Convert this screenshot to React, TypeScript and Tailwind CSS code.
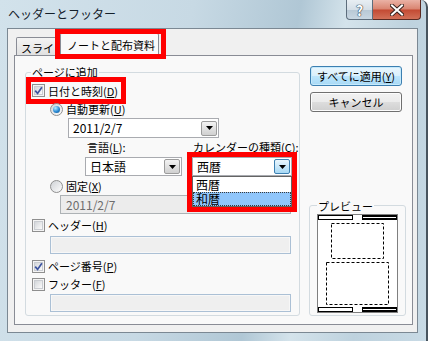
import React from "react";

const jp = "font-['Noto_Sans_CJK_JP','Noto_Sans',sans-serif]";

function CheckBox({ checked = false }: { checked?: boolean }) {
  return (
    <span className="flex h-[13px] w-[13px] shrink-0 items-center justify-center border border-[#8f8f8f] bg-[#f4f4f4] p-[1px]">
      <span className="relative flex h-full w-full items-center justify-center border border-[#c9ccd1] bg-gradient-to-br from-[#d3d6da] to-[#fbfbfb]">
        {checked && (
          <svg width="9" height="9" viewBox="0 0 9 9" className="absolute">
            <path d="M1.2 4.6 L3.6 7.4 L7.9 1.2" stroke="#3d54a0" strokeWidth="1.7" fill="none" />
          </svg>
        )}
      </span>
    </span>
  );
}

function Radio({ checked = false }: { checked?: boolean }) {
  return (
    <span className="flex h-[13px] w-[13px] shrink-0 items-center justify-center rounded-full border border-[#8f8f8f] bg-gradient-to-br from-[#cfd2d6] to-[#fdfdfd]">
      {checked && (
        <span className="h-[7px] w-[7px] rounded-full bg-[radial-gradient(circle_at_35%_30%,#b8ecff_0%,#2a8ad4_55%,#104d86_100%)]" />
      )}
    </span>
  );
}

function Arrow() {
  return (
    <svg width="7" height="4" viewBox="0 0 7 4">
      <path d="M0 0 H7 L3.5 4 Z" fill="#000" />
    </svg>
  );
}

function Combo({ text, className, hot = false }: { text: string; className: string; hot?: boolean }) {
  return (
    <div className={`flex items-center border border-[#a9abb0] bg-white pl-[4px] pr-[1px] ${className}`}>
      <span className="flex-1 text-[12px] leading-[14px]">{text}</span>
      <span
        className={`flex h-[15px] w-[16px] items-center justify-center rounded-[2px] border ${
          hot
            ? "border-[#3c7fb1] bg-gradient-to-b from-[#eaf6fd] to-[#a7d9f5]"
            : "border-[#9c9c9c] bg-gradient-to-b from-[#f3f3f3] to-[#d0d0d0]"
        }`}
      >
        <Arrow />
      </span>
    </div>
  );
}

function Key({ k }: { k: string }) {
  return (
    <>
      (<span className="underline underline-offset-1">{k}</span>)
    </>
  );
}

export default function App() {
  return (
    <div
      className={`flex h-[341px] w-[428px] flex-col overflow-hidden rounded-tr-[7px] border-r-[2px] border-[#48545e] bg-[linear-gradient(100deg,#d2e2eb_0%,#c7d9e4_40%,#b0c7d5_62%,#d4e3eb_72%,#bed2de_85%,#c8dae5_100%)] text-[11px] text-black ${jp}`}
    >
      {/* title bar */}
      <div className="flex h-[28px] shrink-0 items-start justify-between pl-[8px] pr-[5px]">
        <span className="mt-[5px] text-[12px] leading-[17px] text-[#14202a]">ヘッダーとフッター</span>
        <div className="flex">
          <div className="flex h-[20px] w-[27px] items-center justify-center rounded-bl-[4px] border border-t-0 border-[#5d6d7c] bg-[linear-gradient(#e8eef3_0%,#d5dfe7_50%,#b8c8d5_52%,#c9d7e2_100%)] text-[14px] font-bold leading-none text-white [text-shadow:0_0_1px_#2d3d4c,0_0_1px_#2d3d4c,0_0_1px_#2d3d4c]">
            ?
          </div>
          <div className="flex h-[20px] w-[48px] items-center justify-center rounded-br-[4px] border border-l-0 border-t-0 border-[#5a2a22] bg-[linear-gradient(#eab2a5_0%,#d98470_48%,#c34a33_52%,#d27058_100%)]">
            <svg width="14" height="12" viewBox="0 0 14 12">
              <path d="M2 1.5 L12 10.5 M12 1.5 L2 10.5" stroke="#3a2420" strokeWidth="4" strokeLinecap="square" />
              <path d="M2 1.5 L12 10.5 M12 1.5 L2 10.5" stroke="#ffffff" strokeWidth="2" strokeLinecap="square" />
            </svg>
          </div>
        </div>
      </div>

      {/* body */}
      <div className="flex flex-1 flex-col pb-[8px] pl-[7px] pr-[8px]">
        <div className="flex flex-1 flex-col border border-[#7b8893] bg-[#f0f0f0] pb-[7px] pl-[6px] pr-[4px]">
          {/* tabs */}
          <div className="flex h-[26px] shrink-0 items-end pl-[2px]">
            <div className="flex h-[18px] w-[49px] items-center overflow-hidden whitespace-nowrap rounded-t-[2px] border border-b-0 border-[#898c95] bg-gradient-to-b from-[#f4f4f4] to-[#e1e1e1] pl-[4px] pt-[2px] leading-[14px]">
              スライド
            </div>
            <div className="relative z-10 -mb-[1px] -ml-[5px] flex h-[23px] w-[99px] items-center whitespace-nowrap rounded-t-[2px] border border-b-0 border-[#898c95] bg-[#f9f9f9] pl-[6px] leading-[14px]">
              ノートと配布資料
              <div className="pointer-events-none absolute -left-[6px] -top-[5px] h-[30px] w-[111px] border-[5px] border-[#ff0000]" />
            </div>
          </div>

          {/* tab panel */}
          <div className="flex flex-1 items-start border border-[#898c95] bg-[#f9f9f9]">
            {/* group box */}
            <div className="ml-[10px] mt-[16px] flex h-[244px] w-[275px] flex-col rounded-[3px] border border-[#d3dbe0]">
              <span className="-mt-[8px] ml-[5px] w-fit bg-[#f9f9f9] px-[1px] leading-[14px]">ページに追加</span>

              <div className="-mt-[2px] flex h-[27px] w-[100px] items-center gap-[3px] border-[5px] border-[#ff0000] pl-[1px]">
                <CheckBox checked />
                <span className="whitespace-nowrap leading-[14px]">
                  日付と時刻<Key k="D" />
                </span>
              </div>

              <div className="-mt-[2px] ml-[24px] flex h-[14px] items-center gap-[3px]">
                <Radio checked />
                <span className="leading-[14px]">
                  自動更新<Key k="U" />
                </span>
              </div>

              <Combo text="2011/2/7" className="ml-[42px] mt-[2px] h-[20px] w-[151px]" />

              <div className="mt-[2px] flex h-[14px] items-center leading-[14px]">
                <span className="ml-[61px] w-[106px]">
                  言語<Key k="L" />:
                </span>
                <span>
                  カレンダーの種類<Key k="C" />:
                </span>
              </div>

              <div className="ml-[59px] mt-[3px] flex gap-[10px]">
                <Combo text="日本語" className="h-[19px] w-[97px]" />
                <div className="relative z-10">
                  <Combo text="西暦" hot className="h-[19px] w-[100px]" />
                  <div className="absolute left-0 top-[19px] flex h-[31px] w-[100px] flex-col border border-[#646464] bg-white text-[12px]">
                    <span className="h-[15px] pl-[3px] leading-[15px]">西暦</span>
                    <span className="h-[14px] border border-dotted border-[#3a3a3a] bg-[#90c6fb] pl-[2px] leading-[12px]">和暦</span>
                  </div>
                  <div className="pointer-events-none absolute -left-[5px] -top-[5px] h-[60px] w-[110px] border-[5px] border-[#ff0000]" />
                </div>
              </div>

              <div className="ml-[24px] mt-[3px] flex h-[14px] items-center gap-[3px]">
                <Radio />
                <span className="leading-[14px]">
                  固定<Key k="X" />
                </span>
              </div>

              <div className="ml-[34px] mt-[2px] flex h-[19px] w-[231px] items-center border border-[#adb2b5] bg-[#ececec] pl-[5px] text-[12px] leading-[14px] text-[#6d6d6d]">
                2011/2/7
              </div>

              <div className="ml-[6px] mt-[4px] flex h-[14px] items-center gap-[3px]">
                <CheckBox />
                <span className="leading-[14px]">
                  ヘッダー<Key k="H" />
                </span>
              </div>

              <div className="ml-[24px] mt-[4px] h-[18px] w-[241px] border border-[#abc0d5] bg-[#efefef] shadow-[inset_0_0_0_1px_#f7f7f7]" />

              <div className="ml-[6px] mt-[5px] flex h-[14px] items-center gap-[3px]">
                <CheckBox checked />
                <span className="leading-[14px]">
                  ページ番号<Key k="P" />
                </span>
              </div>

              <div className="ml-[6px] mt-[4px] flex h-[14px] items-center gap-[3px]">
                <CheckBox />
                <span className="leading-[14px]">
                  フッター<Key k="F" />
                </span>
              </div>

              <div className="ml-[24px] mt-[3px] h-[18px] w-[241px] border border-[#abc0d5] bg-[#efefef] shadow-[inset_0_0_0_1px_#f7f7f7]" />
            </div>

            {/* right column */}
            <div className="ml-[9px] mt-[10px] flex w-[97px] flex-col">
              <button className="ml-[1px] flex h-[20px] w-[92px] items-center justify-center rounded-[3px] border border-[#3c7fb1] bg-[linear-gradient(#eaf6fd_0%,#d9f0fc_50%,#bee6fd_50%,#a7d9f5_100%)] leading-[14px] shadow-[inset_0_0_0_1px_#c6eafc]">
                すべてに適用<Key k="Y" />
              </button>
              <button className="ml-[1px] mt-[6px] flex h-[20px] w-[92px] items-center justify-center rounded-[3px] border border-[#707070] bg-[linear-gradient(#f2f2f2_0%,#ebebeb_50%,#dddddd_50%,#cfcfcf_100%)] leading-[14px] shadow-[inset_0_0_0_1px_#fcfcfc]">
                キャンセル
              </button>

              <div className="mt-[93px] flex h-[111px] flex-col rounded-[3px] border border-[#d3dbe0]">
                <span className="-mt-[7px] ml-[7px] w-fit bg-[#f9f9f9] px-[1px] leading-[14px]">プレビュー</span>
                <div className="ml-[7px] mt-[1px]">
                  <svg width="81" height="99" viewBox="0 0 81 99">
                    <rect x="0.5" y="0.5" width="80" height="98" fill="#fff" stroke="#7f7f7f" />
                    <rect x="1.5" y="1.5" width="34" height="4" fill="#fff" stroke="#000" />
                    <rect x="45" y="1" width="35" height="5" fill="#000" />
                    <line x1="46" y1="3.5" x2="79" y2="3.5" stroke="#fff" />
                    <rect x="14.5" y="9.5" width="52" height="35" fill="none" stroke="#000" strokeDasharray="3 2" />
                    <rect x="9.5" y="48.5" width="62" height="42" fill="none" stroke="#000" strokeDasharray="3 2" />
                    <rect x="1.5" y="93.5" width="34" height="4" fill="#fff" stroke="#000" />
                    <rect x="45" y="93" width="35" height="5" fill="#000" />
                    <line x1="46" y1="95.5" x2="79" y2="95.5" stroke="#fff" />
                  </svg>
                </div>
              </div>
            </div>
          </div>
        </div>
      </div>
    </div>
  );
}
